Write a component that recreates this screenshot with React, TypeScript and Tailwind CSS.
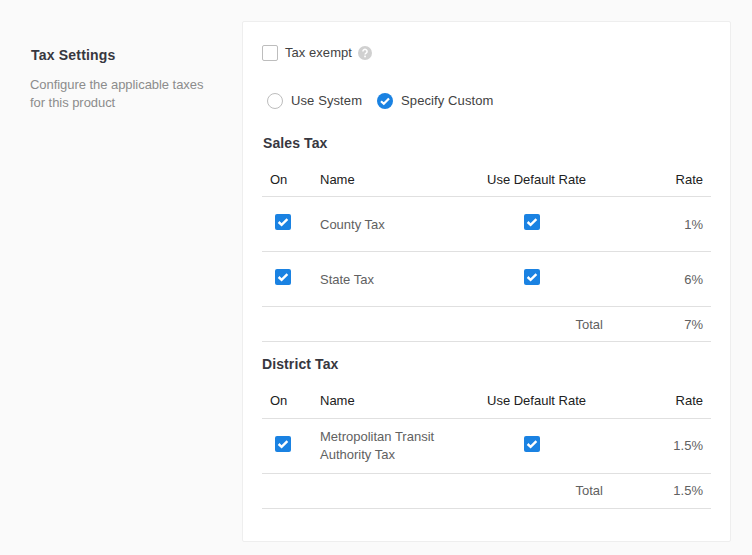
import React from "react";

const font = { fontFamily: "'Liberation Sans', Arial, sans-serif" };

const Check = () => (
  <span className="-mt-1 flex h-4 w-4 items-center justify-center rounded-[2px] bg-[#1a82e2]">
    <svg viewBox="0 0 16 16" className="h-4 w-4" fill="none">
      <path d="M3.6 8l3 2.8 5.8-5.6" stroke="#fff" strokeWidth="2.4" />
    </svg>
  </span>
);

const Head = ({ tall }: { tall?: boolean }) => (
  <div
    className={`flex items-center border-b border-[#e0e0e0] text-[13px] text-[#212121] ${tall ? "h-[35px] pb-px" : "h-[34px]"}`}
  >
    <div className="w-[58px] pl-2">On</div>
    <div className="flex-1">Name</div>
    <div className="w-[164px]">Use Default Rate</div>
    <div className="w-[60px] pr-2 text-right">Rate</div>
  </div>
);

const Row = ({ name, rate, flat }: { name: React.ReactNode; rate: string; flat?: boolean }) => (
  <div className="flex h-[55px] items-center border-b border-[#e0e0e0] text-[13px] text-[#616161]">
    <div className="flex w-[58px] pl-[13px]">
      <Check />
    </div>
    <div className={`flex-1 leading-[18px] ${flat ? "" : "pt-[2px]"}`}>{name}</div>
    <div className="flex w-[164px] pl-[37px]">
      <Check />
    </div>
    <div className={`w-[60px] pr-2 text-right ${flat ? "" : "pt-[2px]"}`}>{rate}</div>
  </div>
);

const Total = ({ rate, flat }: { rate: string; flat?: boolean }) => (
  <div
    className={`flex h-[35px] items-center justify-end border-b border-[#e0e0e0] text-[13px] text-[#616161] ${flat ? "" : "pt-[2px]"}`}
  >
    <div>Total</div>
    <div className="w-[108px] pr-2 text-right">{rate}</div>
  </div>
);

export default function App() {
  return (
    <div className="flex h-[555px] w-[752px] overflow-hidden bg-[#fafafa] pt-[21px]" style={font}>
      <div className="w-[242px] pl-[30px] pt-[26px]">
        <h2 className="pl-px text-[14px] leading-4 font-bold tracking-[0.2px] text-[#37373f]">Tax Settings</h2>
        <p className="mt-[13px] w-[190px] text-[13px] leading-[18px] tracking-[-0.05px] text-[#8c8c8c]">
          Configure the applicable taxes for this product
        </p>
      </div>
      <div className="h-[521px] w-[489px] rounded-[2px] border border-[#eeeeee] bg-white pl-[19px] pr-[19px] pt-[23px]">
        <div className="flex h-4 items-center text-[13px] tracking-[0.05px] text-[#424242]">
          <span className="h-4 w-4 rounded-[2px] border border-[#bdbdbd] bg-white" />
          <span className="ml-[7px]">Tax exempt</span>
          <svg viewBox="0 0 14 14" className="ml-[6px] h-[14px] w-[14px]">
            <circle cx="7" cy="7" r="7" fill="#d0d0d0" />
            <path d="M4.9 5.4a2.1 2 0 1 1 3.2 1.7c-.7.4-1 .8-1 1.5" stroke="#fff" strokeWidth="1.5" fill="none" />
            <rect x="6.2" y="9.6" width="1.7" height="1.7" fill="#fff" />
          </svg>
        </div>
        <div className="mt-8 flex h-4 items-center pl-[5px] text-[13px] tracking-[0.1px] text-[#424242]">
          <span className="h-4 w-4 rounded-full border border-[#bdbdbd] bg-white" />
          <span className="ml-2">Use System</span>
          <svg viewBox="0 0 16 16" className="ml-[15px] h-4 w-4" fill="none">
            <circle cx="8" cy="8" r="8" fill="#1a82e2" />
            <path d="M4 8.2l2.8 2.6 5.2-5.4" stroke="#fff" strokeWidth="2.2" />
          </svg>
          <span className="ml-2">Specify Custom</span>
        </div>
        <h3 className="mt-[26px] pl-px text-[14px] leading-4 font-bold tracking-[0.1px] text-[#37373f]">Sales Tax</h3>
        <div className="mt-3">
          <Head />
          <Row name="County Tax" rate="1%" />
          <Row name="State Tax" rate="6%" />
          <Total rate="7%" />
        </div>
        <h3 className="mt-[14px] text-[14px] leading-4 font-bold tracking-[0.1px] text-[#37373f]">District Tax</h3>
        <div className="mt-3">
          <Head tall />
          <Row
            flat
            name={
              <>
                Metropolitan Transit
                <br />
                Authority Tax
              </>
            }
            rate="1.5%"
          />
          <Total flat rate="1.5%" />
        </div>
      </div>
    </div>
  );
}
